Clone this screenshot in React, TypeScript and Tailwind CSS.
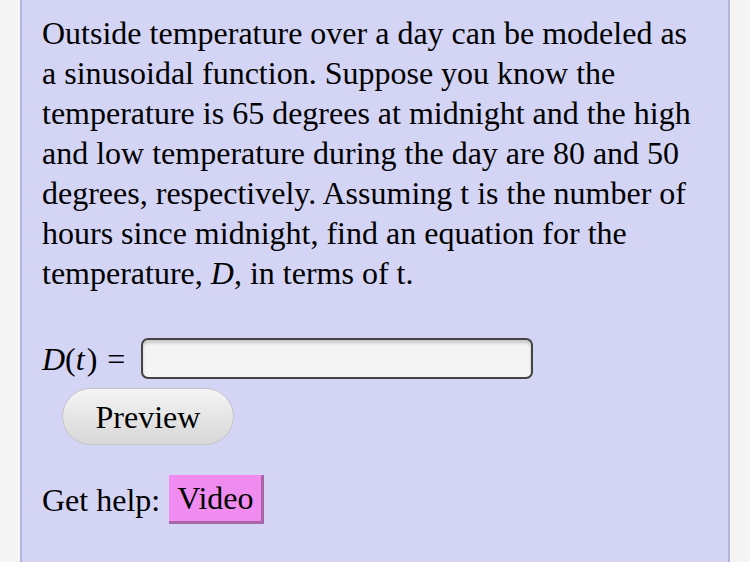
export default function App() {
  return (
    <div className="min-h-[562px] w-[750px] bg-[#f5f5f5] pl-5 pr-5 font-['Liberation_Serif','Times_New_Roman',serif] text-black">
      <div className="min-h-[562px] border-x-2 border-[#b4b4dc] bg-[#d4d4f4] pl-[20px] pr-[16px] pt-[13px]">
        <p className="whitespace-nowrap text-[32px] leading-[40px]">
          Outside temperature over a day can be modeled as<br />
          a sinusoidal function. Suppose you know the<br />
          temperature is 65 degrees at midnight and the high<br />
          and low temperature during the day are 80 and 50<br />
          degrees, respectively. Assuming t is the number of<br />
          hours since midnight, find an equation for the<br />
          temperature, <i>D</i>, in terms of t.
        </p>

        <div className="mt-[45px] flex items-center">
          <span className="text-[32px] leading-[40px]">
            <i>D</i>(<i className="pr-[2px]">t</i>) <span className="ml-[2px]">=</span>
          </span>
          <input
            type="text"
            className="ml-[16px] h-[41px] w-[392px] rounded-[7px] border-2 border-[#444] bg-[#f4f4f4] shadow-[inset_0_3px_3px_rgba(0,0,0,0.18)] outline-none"
          />
        </div>

        <button className="ml-[20px] mt-[9px] h-[57px] w-[172px] rounded-full border border-[#c4c4cc] bg-gradient-to-b from-[#f4f4f4] to-[#d8d8d8] text-[32px] leading-none text-black">
          Preview
        </button>

        <div className="mt-[30px] flex items-center text-[32px] leading-[40px]">
          <span>Get help:</span>
          <span className="ml-[9px] h-[49px] border-r-[3px] border-b-[3px] border-[#a866a8] bg-[#f08cf0] px-[8px] pt-[3px] leading-[40px]">
            Video
          </span>
        </div>
      </div>
    </div>
  )
}
